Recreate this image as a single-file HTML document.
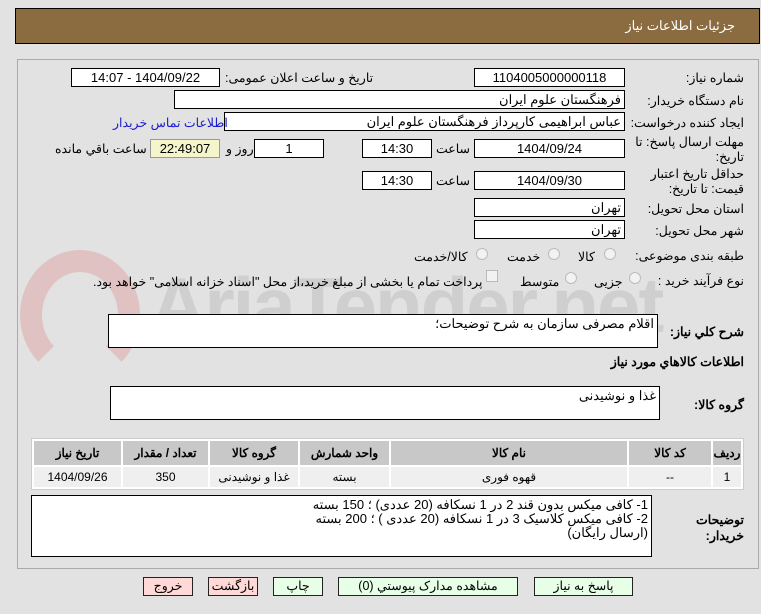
<!DOCTYPE html>
<html><head><meta charset="utf-8"><style>
*{box-sizing:border-box;margin:0;padding:0}
body{width:761px;height:614px;background:#e2e2e2;font-family:Tahoma,"Liberation Sans","Noto Sans CJK SC",sans-serif;font-size:12px;color:#000;position:relative;overflow:hidden;direction:rtl}
.a{position:absolute;white-space:nowrap}
.box{position:absolute;background:#fff;border:1px solid #000;text-align:center;line-height:17px;font-size:13px}
.r{text-align:right;padding-right:3px}
.lbl{position:absolute;white-space:nowrap;font-size:12.5px}
.btn{position:absolute;border:1px solid #222;height:19px;line-height:17px;text-align:center;font-size:12.5px;background:#e6ffe6}
.rad{position:absolute;width:12px;height:12px;border:1px solid #bbb;border-radius:50%;background:#f2f2f2}
table{border-collapse:separate;border-spacing:2px;position:absolute;left:31px;top:438px;width:713px;background:#fff;border:1px solid #ccc}
th{background:#c8c8c8;height:24px;font-size:12px}
td{background:#efefef;height:20px;text-align:center;font-size:12px}
</style></head><body>
<div class="a" style="left:15px;top:8px;width:745px;height:36px;background:#8b6b40;border:1px solid #000"></div>
<div class="a" style="right:26px;top:18px;color:#fff;font-size:13px">جزئیات اطلاعات نیاز</div>
<div class="a" style="left:17px;top:59px;width:742px;height:510px;border:1px solid #aaa;background:#e2e2e2"></div>
<!-- watermark -->
<div class="a" style="left:20px;top:250px;width:120px;height:130px;border:22px solid rgba(220,120,120,0.3);border-radius:50%;border-bottom-color:transparent"></div>
<div class="a" style="left:150px;top:260px;font-size:78px;font-weight:bold;color:rgba(150,150,150,0.25);direction:ltr;font-family:'Liberation Sans',sans-serif;letter-spacing:-2px">AriaTender.net</div>

<div class="lbl" style="right:17px;top:70px">شماره نیاز:</div>
<div class="box" style="left:474px;top:68px;width:151px;height:19px">1104005000000118</div>
<div class="lbl" style="left:225px;top:70px">تاریخ و ساعت اعلان عمومی:</div>
<div class="box" style="left:71px;top:68px;width:149px;height:19px">1404/09/22 - 14:07</div>
<div class="lbl" style="right:17px;top:93px">نام دستگاه خریدار:</div>
<div class="box r" style="left:174px;top:90px;width:451px;height:19px">فرهنگستان علوم ایران</div>
<div class="lbl" style="right:17px;top:115px">ایجاد کننده درخواست:</div>
<div class="box r" style="left:224px;top:112px;width:401px;height:19px">عباس ابراهیمی کارپرداز فرهنگستان علوم ایران</div>
<div class="lbl" style="left:113px;top:115px;color:#1a1ad0">اطلاعات تماس خریدار</div>
<div class="lbl" style="right:17px;top:135px;line-height:15px;text-align:right">مهلت ارسال پاسخ: تا<br>تاریخ:</div>
<div class="box" style="left:474px;top:139px;width:151px;height:19px">1404/09/24</div>
<div class="lbl" style="left:436px;top:141px">ساعت</div>
<div class="box" style="left:362px;top:139px;width:70px;height:19px">14:30</div>
<div class="box" style="left:254px;top:139px;width:70px;height:19px">1</div>
<div class="lbl" style="left:226px;top:141px">روز و</div>
<div class="box" style="left:150px;top:139px;width:70px;height:19px;background:#f5f5cc;border-color:#999">22:49:07</div>
<div class="lbl" style="left:55px;top:141px">ساعت باقي مانده</div>
<div class="lbl" style="right:17px;top:167px;line-height:15px;text-align:right">حداقل تاریخ اعتبار<br>قیمت: تا تاریخ:</div>
<div class="box" style="left:474px;top:171px;width:151px;height:19px">1404/09/30</div>
<div class="lbl" style="left:436px;top:173px">ساعت</div>
<div class="box" style="left:362px;top:171px;width:70px;height:19px">14:30</div>
<div class="lbl" style="right:17px;top:201px">استان محل تحویل:</div>
<div class="box r" style="left:474px;top:198px;width:151px;height:19px">تهران</div>
<div class="lbl" style="right:17px;top:223px">شهر محل تحویل:</div>
<div class="box r" style="left:474px;top:220px;width:151px;height:19px">تهران</div>
<div class="lbl" style="right:17px;top:248px">طبقه بندی موضوعی:</div>
<div class="rad" style="left:604px;top:248px"></div><div class="lbl" style="left:578px;top:249px">کالا</div>
<div class="rad" style="left:548px;top:248px"></div><div class="lbl" style="left:507px;top:249px">خدمت</div>
<div class="rad" style="left:476px;top:248px"></div><div class="lbl" style="left:414px;top:249px">کالا/خدمت</div>
<div class="lbl" style="right:17px;top:273px">نوع فرآیند خرید :</div>
<div class="rad" style="left:629px;top:272px"></div><div class="lbl" style="left:594px;top:274px">جزیی</div>
<div class="rad" style="left:565px;top:272px"></div><div class="lbl" style="left:520px;top:274px">متوسط</div>
<div class="a" style="left:486px;top:270px;width:12px;height:12px;border:1px solid #bbb;background:#f2f2f2"></div>
<div class="lbl" style="left:93px;top:274px">پرداخت تمام یا بخشی از مبلغ خرید،از محل "اسناد خزانه اسلامی" خواهد بود.</div>

<div class="lbl" style="right:17px;top:324px;font-weight:bold">شرح کلي نیاز:</div>
<div class="box r" style="left:108px;top:314px;width:550px;height:34px;text-align:right;line-height:18px">اقلام مصرفی سازمان به شرح توضیحات؛</div>
<div class="lbl" style="right:17px;top:354px;font-weight:bold">اطلاعات کالاهاي مورد نیاز</div>
<div class="lbl" style="right:17px;top:397px;font-weight:bold">گروه کالا:</div>
<div class="box r" style="left:110px;top:386px;width:550px;height:34px;text-align:right;line-height:18px">غذا و نوشیدنی</div>

<table><tr><th style="width:28px">ردیف</th><th style="width:82px">کد کالا</th><th style="width:236px">نام کالا</th><th style="width:89px">واحد شمارش</th><th style="width:88px">گروه کالا</th><th style="width:85px">تعداد / مقدار</th><th>تاریخ نیاز</th></tr>
<tr><td>1</td><td>--</td><td>قهوه فوری</td><td>بسته</td><td>غذا و نوشیدنی</td><td>350</td><td>1404/09/26</td></tr></table>

<div class="lbl" style="right:17px;top:512px;font-weight:bold;line-height:16px;text-align:right">توضیحات<br>خریدار:</div>
<div class="box r" style="left:31px;top:495px;width:621px;height:62px;text-align:right;line-height:14px;padding-top:2px">1- کافی میکس بدون قند 2 در 1 نسکافه (20 عددی) ؛ 150 بسته<br>2- کافی میکس کلاسیک 3 در 1 نسکافه (20 عددی ) ؛ 200 بسته<br>(ارسال رایگان)</div>

<div class="btn" style="left:534px;top:577px;width:99px">پاسخ به نیاز</div>
<div class="btn" style="left:338px;top:577px;width:180px">مشاهده مدارک پیوستي (0)</div>
<div class="btn" style="left:273px;top:577px;width:50px">چاپ</div>
<div class="btn" style="left:208px;top:577px;width:50px;background:#ffd8d8">بازگشت</div>
<div class="btn" style="left:143px;top:577px;width:50px;background:#ffd8d8">خروج</div>
</body></html>
